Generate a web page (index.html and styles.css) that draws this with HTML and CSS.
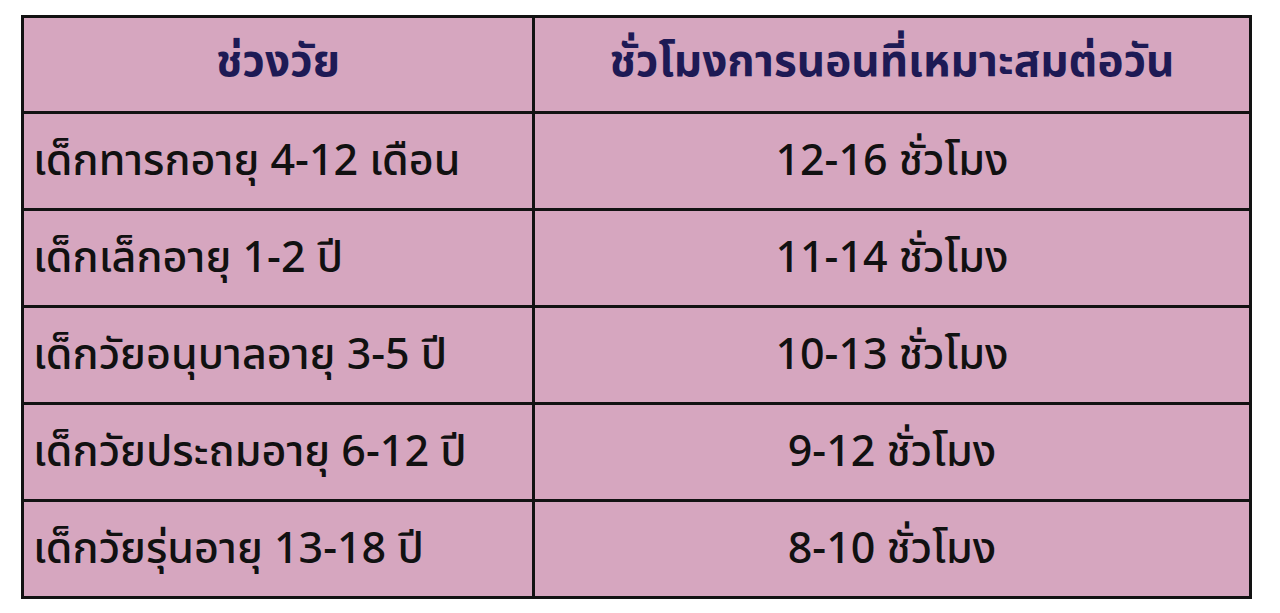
FILE: index.html
```html
<!DOCTYPE html>
<html lang="th">
<head>
<meta charset="utf-8">
<link rel="stylesheet" href="styles.css">
</head>
<body>
<div class="page">
  <div class="table">
    <div class="cell head">ช่วงวัย</div>
    <div class="cell head">ชั่วโมงการนอนที่เหมาะสมต่อวัน</div>
    <div class="cell left">เด็กทารกอายุ 4-12 เดือน</div>
    <div class="cell center">12-16 ชั่วโมง</div>
    <div class="cell left">เด็กเล็กอายุ 1-2 ปี</div>
    <div class="cell center">11-14 ชั่วโมง</div>
    <div class="cell left">เด็กวัยอนุบาลอายุ 3-5 ปี</div>
    <div class="cell center">10-13 ชั่วโมง</div>
    <div class="cell left">เด็กวัยประถมอายุ 6-12 ปี</div>
    <div class="cell center">9-12 ชั่วโมง</div>
    <div class="cell left">เด็กวัยรุ่นอายุ 13-18 ปี</div>
    <div class="cell center">8-10 ชั่วโมง</div>
  </div>
</div>
</body>
</html>
```

FILE: styles.css
```css
html, body {
  margin: 0;
  padding: 0;
  background: #ffffff;
}

.page {
  padding: 15px 0 0 21px;
}

.table {
  display: grid;
  grid-template-columns: 508px 714px;
  grid-template-rows: 93px repeat(5, 94px);
  gap: 3px;
  padding: 3px;
  width: max-content;
  background: #121212;
  font-family: "Tahoma", "Leelawadee UI", "Noto Sans Thai", "Noto Sans Thai UI", "Loma", "Garuda", sans-serif;
}

.cell {
  background: #d6a6bf;
  display: flex;
  align-items: center;
  font-size: 43px;
  font-weight: 500;
  color: #111111;
}

.head {
  justify-content: center;
  font-size: 44px;
  font-weight: bold;
  color: #1e1a55;
  padding-bottom: 4px;
}

.left {
  padding-left: 9px;
}

.center {
  justify-content: center;
}
```
